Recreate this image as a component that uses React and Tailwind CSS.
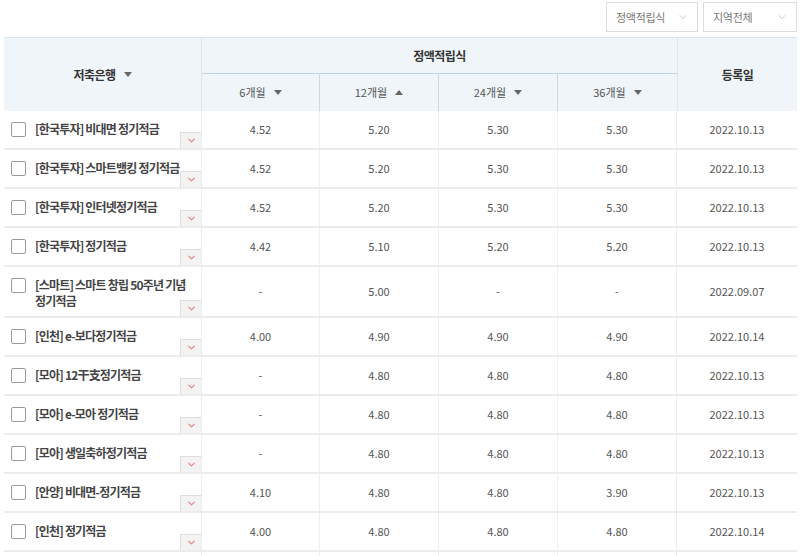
import React from "react";
import { ChevronDown } from "lucide-react";

const rows = [
  ["[한국투자] 비대면 정기적금", "4.52", "5.20", "5.30", "5.30", "2022.10.13"],
  ["[한국투자] 스마트뱅킹 정기적금", "4.52", "5.20", "5.30", "5.30", "2022.10.13"],
  ["[한국투자] 인터넷정기적금", "4.52", "5.20", "5.30", "5.30", "2022.10.13"],
  ["[한국투자] 정기적금", "4.42", "5.10", "5.20", "5.20", "2022.10.13"],
  ["[스마트] 스마트 창립 50주년 기념 정기적금", "-", "5.00", "-", "-", "2022.09.07", true],
  ["[인천] e-보다정기적금", "4.00", "4.90", "4.90", "4.90", "2022.10.14"],
  ["[모아] 12干支정기적금", "-", "4.80", "4.80", "4.80", "2022.10.13"],
  ["[모아] e-모아 정기적금", "-", "4.80", "4.80", "4.80", "2022.10.13"],
  ["[모아] 생일축하정기적금", "-", "4.80", "4.80", "4.80", "2022.10.13"],
  ["[안양] 비대면-정기적금", "4.10", "4.80", "4.80", "3.90", "2022.10.13"],
  ["[인천] 정기적금", "4.00", "4.80", "4.80", "4.80", "2022.10.14"],
];

const Tri = ({ up }) => (
  <svg width="8" height="5" viewBox="0 0 8 5" className="inline-block ml-2">
    {up ? <path d="M0 5 L4 0 L8 5 Z" fill="#666" /> : <path d="M0 0 L8 0 L4 5 Z" fill="#666" />}
  </svg>
);

const Select = ({ label, w }) => (
  <div className={`${w} h-[30px] border border-[#dddddd] bg-white flex items-center justify-between pl-[9px] pr-[8px] text-[11px] text-[#777] tracking-[-0.3px]`}>
    <span>{label}</span>
    <ChevronDown size={12} strokeWidth={1.3} color="#aaa" />
  </div>
);

const cols = "grid grid-cols-[198px_118px_119px_119px_119px_120px]";

const App = () => {
  return (
    <div
      className="w-[800px] h-[556px] overflow-hidden bg-white"
      style={{ fontFamily: '"Noto Sans CJK KR", "Noto Sans", sans-serif' }}
    >
      <div className="flex justify-end gap-[5px] pt-[2px] pr-[3px]">
        <Select label="정액적립식" w="w-[92px]" />
        <Select label="지역전체" w="w-[94px]" />
      </div>

      <div className="ml-[4px] mt-[5px] w-[793px]">
        <div className={`${cols} grid-rows-[36px_37px] bg-[#eff5f9] border-t border-[#dbe5ed]`}>
          <div className="row-span-2 flex items-center justify-center text-[12px] font-bold text-[#333] tracking-[-0.5px] border-r border-[#dde6ee]">
            저축은행 <Tri />
          </div>
          <div className="col-span-4 flex items-center justify-center text-[12px] font-bold text-[#333] tracking-[-0.5px] border-b border-[#bfd2e4]">
            정액적립식
          </div>
          <div className="row-span-2 flex items-center justify-center text-[12px] font-bold text-[#333] tracking-[-0.5px] border-l border-[#dde6ee]">
            등록일
          </div>
          <div className="flex items-center justify-center text-[11px] text-[#555] border-r border-[#c9d9e8]">
            6개월 <Tri />
          </div>
          <div className="flex items-center justify-center text-[11px] text-[#555] border-r border-[#c9d9e8]">
            12개월 <Tri up />
          </div>
          <div className="flex items-center justify-center text-[11px] text-[#555] border-r border-[#c9d9e8]">
            24개월 <Tri />
          </div>
          <div className="flex items-center justify-center text-[11px] text-[#555]">
            36개월 <Tri />
          </div>
        </div>

        {rows.map((r, i) => (
          <div
            key={i}
            className={`${cols} ${r[6] ? "h-[51px]" : "h-[39px]"} border-b-2 border-[#ececec]`}
          >
            <div className="relative flex items-start border-r border-[#eeeeee] pl-[7px] pr-[6px] pt-[10px]">
              <div className="shrink-0 w-[15px] h-[15px] border border-[#9a9a9a] rounded-[2px] bg-white mt-[1px]" />
              <div className="ml-[9px] text-[12px] font-semibold text-[#444] leading-[16px] tracking-[-0.8px] break-keep">{r[0]}</div>
              <div className="absolute right-0 bottom-0 w-[21px] h-[16px] bg-[#f3f3f3] border-t border-l border-[#dddddd] flex items-center justify-center">
                <ChevronDown size={11} strokeWidth={2.6} color="#ee7f7f" />
              </div>
            </div>
            {r.slice(1, 6).map((v, j) => (
              <div
                key={j}
                className={`flex items-center justify-center text-[11px] text-[#555] ${j < 4 ? "border-r border-[#eeeeee]" : ""}`}
              >
                {v}
              </div>
            ))}
          </div>
        ))}
        <div className={`${cols} h-[39px]`}>
          <div className="border-r border-[#eeeeee]" />
          <div className="border-r border-[#eeeeee]" />
          <div className="border-r border-[#eeeeee]" />
          <div className="border-r border-[#eeeeee]" />
          <div className="border-r border-[#eeeeee]" />
          <div />
        </div>
      </div>
    </div>
  );
};

export default App;
